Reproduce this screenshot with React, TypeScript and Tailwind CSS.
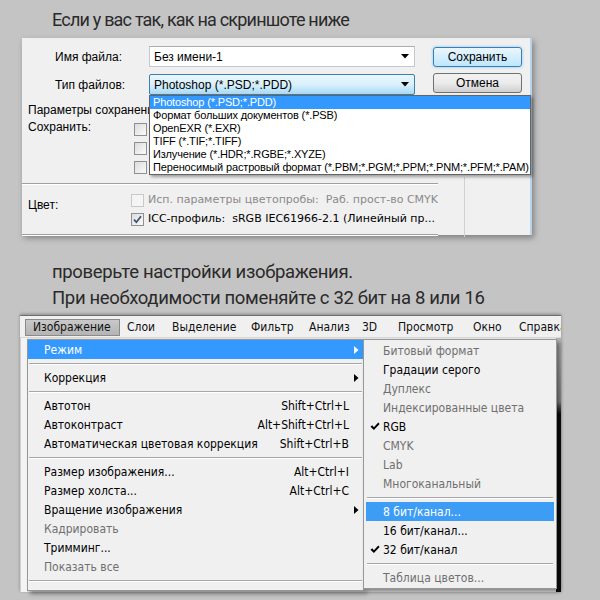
import React from "react";

const ui = "font-['Liberation_Sans',Arial,sans-serif]";
const tah = "font-['DejaVu_Sans',Verdana,sans-serif]";
const tahc = "font-['DejaVu_Sans_Condensed','DejaVu_Sans',Verdana,sans-serif] [font-stretch:condensed]";

function DownArrow() {
  return (
    <svg width="8" height="5" viewBox="0 0 8 5">
      <path d="M0 0 L8 0 L4 4.5 Z" fill="#000" />
    </svg>
  );
}

function RightArrow({ white }: { white?: boolean }) {
  return (
    <svg width="5" height="8" viewBox="0 0 5 8">
      <path d="M0 0 L4.5 4 L0 8 Z" fill={white ? "#fff" : "#000"} />
    </svg>
  );
}

function MenuCheck() {
  return (
    <svg width="10" height="9" viewBox="0 0 10 9">
      <path d="M0.5 4.8 L2.2 3.3 L3.9 5.2 L8.3 0.6 L9.6 1.9 L3.9 8 Z" fill="#000" />
    </svg>
  );
}

function Box({ checked, disabled }: { checked?: boolean; disabled?: boolean }) {
  return (
    <div
      className={`w-[13px] h-[13px] border flex items-center justify-center shrink-0 ${
        disabled
          ? "border-[#c9c9c9] bg-[#f4f4f4]"
          : "border-[#8e8f8f] bg-linear-to-br from-[#dcdcdc] to-[#fbfbfb]"
      }`}
    >
      {checked && (
        <svg width="9" height="9" viewBox="0 0 9 9">
          <path d="M1 4.6 L3.4 7.2 L8 1.3" stroke="#3b4f7a" strokeWidth="1.7" fill="none" />
        </svg>
      )}
    </div>
  );
}

function Dialog() {
  const items = [
    "Photoshop (*.PSD;*.PDD)",
    "Формат больших документов (*.PSB)",
    "OpenEXR (*.EXR)",
    "TIFF (*.TIF;*.TIFF)",
    "Излучение (*.HDR;*.RGBE;*.XYZE)",
    "Переносимый растровый формат (*.PBM;*.PGM;*.PPM;*.PNM;*.PFM;*.PAM)",
  ];
  return (
    <div
      className={`ml-[22px] w-[510px] h-[197px] relative bg-[#f0f0f0] border-r-2 border-r-[#b9d3ec] shadow-[2px_3px_6px_rgba(0,0,0,0.35)] text-[12px] text-black ${ui}`}
    >
      {/* row 1 */}
      <div className="pt-[8px] flex items-start">
        <div className="w-[127px] pl-[33px] h-[21px] flex items-center">Имя файла:</div>
        <div className="w-[266px] h-[21px] bg-white border border-[#c5c8cf] border-t-[#abadb3] flex items-center justify-between pl-[4px] pr-[5px]">
          <span>Без имени-1</span>
          <DownArrow />
        </div>
        <div className="ml-[18px] mt-[1px] w-[89px] h-[20px] rounded-[3px] border border-[#3c7fb1] bg-linear-to-b from-[#eaf6fd] to-[#bee6fd] shadow-[0_0_3px_#6fc4f3] flex items-center justify-center">
          Сохранить
        </div>
      </div>
      {/* row 2 */}
      <div className="mt-[7px] flex items-start">
        <div className="w-[127px] pl-[33px] h-[21px] flex items-center">Тип файлов:</div>
        <div className="w-[266px] h-[21px] rounded-[2px] border border-[#3c7fb1] bg-linear-to-b from-[#eaf6fd] via-[#d9f0fc] to-[#a7d9f5] flex items-center justify-between pl-[4px] pr-[5px]">
          <span>Photoshop (*.PSD;*.PDD)</span>
          <DownArrow />
        </div>
        <div className="ml-[18px] -mt-[1px] w-[89px] h-[20px] rounded-[3px] border border-[#707070] bg-linear-to-b from-[#f2f2f2] via-[#ebebeb] to-[#cfcfcf] flex items-center justify-center">
          Отмена
        </div>
      </div>
      {/* Параметры */}
      <div className="mt-[7px] pl-[6px] h-[16px] flex items-center">Параметры сохранения</div>
      <div className="mt-[3px] flex">
        <div className="w-[112px] pl-[6px] leading-[12px]">Сохранить:</div>
        <div className="pt-[2px] flex flex-col gap-[6px]">
          <Box />
          <Box />
          <Box />
        </div>
      </div>
      {/* lower part */}
      <div className="mt-[9px] flex">
        <div className="w-[416px]">
          <div className="h-[1px] bg-[#a0a0a0] border-b border-white box-content" />
          <div className={`flex mt-[9px] ${tah} text-[11px]`}>
            <div className={`w-[112px] pl-[6px] pt-[2px] ${ui} text-[12px]`}>Цвет:</div>
            <div className="flex flex-col gap-[6px]">
              <div className="flex items-center gap-[4px] h-[13px]">
                <Box disabled />
                <span className="text-[#8a8a8a] whitespace-nowrap">
                  Исп. параметры цветопробы:&nbsp; Раб. прост-во CMYK
                </span>
              </div>
              <div className="flex items-center gap-[4px] h-[13px]">
                <Box checked />
                <span className="whitespace-nowrap">ICC-профиль:&nbsp; sRGB IEC61966-2.1 (Линейный пр...</span>
              </div>
            </div>
          </div>
          <div className="mt-[8px] h-[1px] bg-[#a0a0a0] border-b border-white box-content" />
        </div>
        <div className="ml-[26px] -mt-[6px] w-[1px] h-[60px] bg-[#d0d0d0]" />
      </div>

      {/* dropdown list overlay */}
      <div className="absolute left-[127px] top-[57px] w-[382px] bg-white border border-[#646464] shadow-[2px_2px_3px_rgba(0,0,0,0.35)] text-[11px] tracking-[-0.15px]">
        {items.map((t, i) => (
          <div
            key={i}
            className={`h-[13px] leading-[13px] pl-[3px] whitespace-nowrap overflow-hidden ${
              i === 0 ? "bg-[#3399ff] text-white" : "text-black"
            }`}
          >
            {t}
          </div>
        ))}
      </div>
    </div>
  );
}

type MItem = { t?: string; k?: string; sub?: boolean; dis?: boolean; hi?: boolean; sep?: boolean; chk?: boolean };

function Sep({ sub }: { sub?: boolean }) {
  return (
    <div className={`h-[9px] flex items-center ${sub ? "mx-[3px]" : "mx-[1px]"}`}>
      <div className="w-full h-[1px] bg-[#a7a7a7] border-b border-white box-content" />
    </div>
  );
}

function MainMenu() {
  const items: MItem[] = [
    { t: "Режим", sub: true, hi: true },
    { sep: true },
    { t: "Коррекция", sub: true },
    { sep: true },
    { t: "Автотон", k: "Shift+Ctrl+L" },
    { t: "Автоконтраст", k: "Alt+Shift+Ctrl+L" },
    { t: "Автоматическая цветовая коррекция", k: "Shift+Ctrl+B" },
    { sep: true },
    { t: "Размер изображения...", k: "Alt+Ctrl+I" },
    { t: "Размер холста...", k: "Alt+Ctrl+C" },
    { t: "Вращение изображения", sub: true },
    { t: "Кадрировать", dis: true },
    { t: "Тримминг..." },
    { t: "Показать все", dis: true },
    { sep: true },
  ];
  return (
    <div className="absolute left-[7px] top-[23px] w-[337px] h-[252px] bg-[#f0f0f0] border border-[#979797] shadow-[3px_3px_4px_rgba(0,0,0,0.4)]">
      {items.map((it, i) =>
        it.sep ? (
          <Sep key={i} />
        ) : (
          <div
            key={i}
            className={`h-[19px] flex items-center pl-[16px] ${
              it.hi ? "bg-[#3399ff] text-white" : it.dis ? "text-[#6f6f6f]" : "text-black"
            }`}
          >
            <span className="flex-1 whitespace-nowrap">{it.t}</span>
            {it.k && <span className="whitespace-nowrap">{it.k}</span>}
            <span className="w-[14px] flex justify-end pr-[4px]">{it.sub && <RightArrow white={it.hi} />}</span>
          </div>
        )
      )}
    </div>
  );
}

function SubMenu() {
  const items: MItem[] = [
    { t: "Битовый формат", dis: true },
    { t: "Градации серого" },
    { t: "Дуплекс", dis: true },
    { t: "Индексированные цвета", dis: true },
    { t: "RGB", chk: true },
    { t: "CMYK", dis: true },
    { t: "Lab", dis: true },
    { t: "Многоканальный", dis: true },
    { sep: true },
    { t: "8 бит/канал...", hi: true },
    { t: "16 бит/канал..." },
    { t: "32 бит/канал", chk: true },
    { sep: true },
    { t: "Таблица цветов...", dis: true },
  ];
  return (
    <div className="absolute left-[343px] top-[23px] w-[194px] h-[250px] bg-[#f0f0f0] border border-[#979797] shadow-[3px_3px_4px_rgba(0,0,0,0.4)] pt-[1px]">
      {items.map((it, i) =>
        it.sep ? (
          <Sep key={i} sub />
        ) : (
          <div
            key={i}
            className={`h-[19px] mx-[2px] flex items-center ${
              it.hi ? "bg-[#3d9df5] text-white" : it.dis ? "text-[#6f6f6f]" : "text-black"
            }`}
          >
            <span className="w-[17px] flex justify-center">{it.chk && <MenuCheck />}</span>
            <span className="whitespace-nowrap">{it.t}</span>
          </div>
        )
      )}
    </div>
  );
}

function Window() {
  const bar = [
    { t: "Изображение", w: "w-[95px]", on: true },
    { t: "Слои", w: "w-[45px]" },
    { t: "Выделение", w: "w-[79px]" },
    { t: "Фильтр", w: "w-[58px]" },
    { t: "Анализ", w: "w-[53px]" },
    { t: "3D", w: "w-[36px]" },
    { t: "Просмотр", w: "w-[75px]" },
    { t: "Окно", w: "w-[46px]" },
    { t: "Справка", w: "w-[60px]" },
  ];
  return (
    <div
      className={`ml-[20px] mt-[4px] w-[541px] h-[277px] relative bg-[#e6e6e6] border-t border-t-[#6e6e6e] shadow-[0_-1px_3px_rgba(0,0,0,0.3)] text-[12px] ${tahc}`}
    >
      <div className="h-[22px] bg-[#f0f0f0] flex items-center pl-[5px] pt-[1px] overflow-hidden border-b border-[#d8d8d8]">
        {bar.map((b) => (
          <div
            key={b.t}
            className={`${b.w} shrink-0 h-[17px] flex items-center pl-[7px] text-[#111] whitespace-nowrap ${
              b.on ? "bg-linear-to-b from-[#c9c9c9] to-[#b4b4b4] border border-[#8a8a8a] w-[93px] pl-[6px]" : ""
            }`}
          >
            {b.t}
          </div>
        ))}
      </div>
      <div className="flex h-[254px]">
        <div className="w-[7px] bg-[#f4f4f4] border-l border-[#cfcfcf]" />
        <div className="flex-1" />
        <div className="w-[5px] bg-linear-to-b from-[#b5b5b5] via-[#8a8a8a] via-25% to-[#0c0c0c] to-30%" />
      </div>
      <MainMenu />
      <SubMenu />
    </div>
  );
}

export default function App() {
  return (
    <div className="w-[600px] h-[600px] overflow-hidden bg-[#c4c4c4] flex flex-col">
      <div className="h-[38px] pl-[52px] flex items-center text-[18px] tracking-[-0.8px] text-[#2a2a2a] font-['Roboto',sans-serif]">
        Если у вас так, как на скриншоте ниже
      </div>
      <Dialog />
      <div className="mt-[24px] pl-[52px] text-[18.5px] tracking-[-0.35px] leading-[26px] text-[#2a2a2a] font-['Roboto',sans-serif]">
        <div>проверьте настройки изображения.</div>
        <div>При необходимости поменяйте с 32 бит на 8 или 16</div>
      </div>
      <Window />
    </div>
  );
}
